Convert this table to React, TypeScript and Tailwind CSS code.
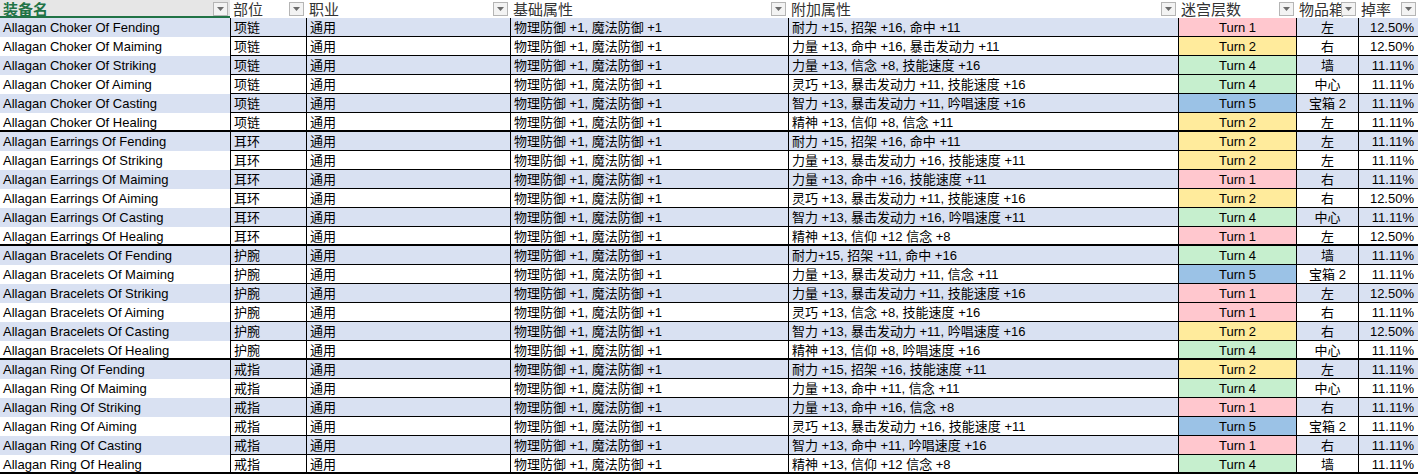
import React from "react";

type Row = [string, string, string, string, number, string, string];

const rows: Row[] = [
  ["Allagan Choker Of Fending", "项链", "通用", "耐力 +15, 招架 +16, 命中 +11", 1, "左", "12.50%"],
  ["Allagan Choker Of Maiming", "项链", "通用", "力量 +13, 命中 +16, 暴击发动力 +11", 2, "右", "12.50%"],
  ["Allagan Choker Of Striking", "项链", "通用", "力量 +13, 信念 +8, 技能速度 +16", 4, "墙", "11.11%"],
  ["Allagan Choker Of Aiming", "项链", "通用", "灵巧 +13, 暴击发动力 +11, 技能速度 +16", 4, "中心", "11.11%"],
  ["Allagan Choker Of Casting", "项链", "通用", "智力 +13, 暴击发动力 +11, 吟唱速度 +16", 5, "宝箱 2", "11.11%"],
  ["Allagan Choker Of Healing", "项链", "通用", "精神 +13, 信仰 +8, 信念 +11", 2, "左", "11.11%"],
  ["Allagan Earrings Of Fending", "耳环", "通用", "耐力 +15, 招架 +16, 命中 +11", 2, "左", "11.11%"],
  ["Allagan Earrings Of Striking", "耳环", "通用", "力量 +13, 暴击发动力 +16, 技能速度 +11", 2, "左", "11.11%"],
  ["Allagan Earrings Of Maiming", "耳环", "通用", "力量 +13, 命中 +16, 技能速度 +11", 1, "右", "11.11%"],
  ["Allagan Earrings Of Aiming", "耳环", "通用", "灵巧 +13, 暴击发动力 +11, 技能速度 +16", 2, "右", "12.50%"],
  ["Allagan Earrings Of Casting", "耳环", "通用", "智力 +13, 暴击发动力 +16, 吟唱速度 +11", 4, "中心", "11.11%"],
  ["Allagan Earrings Of Healing", "耳环", "通用", "精神 +13, 信仰 +12 信念 +8", 1, "左", "12.50%"],
  ["Allagan Bracelets Of Fending", "护腕", "通用", "耐力+15, 招架 +11, 命中 +16", 4, "墙", "11.11%"],
  ["Allagan Bracelets Of Maiming", "护腕", "通用", "力量 +13, 暴击发动力 +11, 信念 +11", 5, "宝箱 2", "11.11%"],
  ["Allagan Bracelets Of Striking", "护腕", "通用", "力量 +13, 暴击发动力 +11, 技能速度 +16", 1, "左", "12.50%"],
  ["Allagan Bracelets Of Aiming", "护腕", "通用", "灵巧 +13, 信念 +8, 技能速度 +16", 1, "右", "11.11%"],
  ["Allagan Bracelets Of Casting", "护腕", "通用", "智力 +13, 暴击发动力 +11, 吟唱速度 +16", 2, "右", "12.50%"],
  ["Allagan Bracelets Of Healing", "护腕", "通用", "精神 +13, 信仰 +8, 吟唱速度 +16", 4, "中心", "11.11%"],
  ["Allagan Ring Of Fending", "戒指", "通用", "耐力 +15, 招架 +16, 技能速度 +11", 2, "左", "11.11%"],
  ["Allagan Ring Of Maiming", "戒指", "通用", "力量 +13, 命中 +11, 信念 +11", 4, "中心", "11.11%"],
  ["Allagan Ring Of Striking", "戒指", "通用", "力量 +13, 命中 +16, 信念 +8", 1, "右", "11.11%"],
  ["Allagan Ring Of Aiming", "戒指", "通用", "灵巧 +13, 暴击发动力 +16, 技能速度 +11", 5, "宝箱 2", "11.11%"],
  ["Allagan Ring Of Casting", "戒指", "通用", "智力 +13, 命中 +11, 吟唱速度 +16", 1, "右", "11.11%"],
  ["Allagan Ring Of Healing", "戒指", "通用", "精神 +13, 信仰 +12 信念 +8", 4, "墙", "11.11%"],
];

const turnStyle: Record<number, string> = {
  1: "bg-[#ffc7ce] text-[#9c0006]",
  2: "bg-[#ffeb9c] text-[#9c5700]",
  4: "bg-[#c6efce] text-[#006100]",
  5: "bg-[#9bc2e6] text-[#1f3864]",
};

const gridCols = "grid grid-cols-[230px_76px_204px_278px_390px_118px_62px_60px]";

function Drop() {
  return (
    <div className="absolute right-[2px] top-[2px] flex h-[14px] w-[15px] items-center justify-center border border-[#b5b5b5] bg-[#f3f3f3]">
      <svg width="7" height="4" viewBox="0 0 7 4">
        <path d="M0 0 L7 0 L3.5 4 Z" fill="#6b6b6b" />
      </svg>
    </div>
  );
}

function HeadCell({ label, first }: { label: string; first?: boolean }) {
  return (
    <div
      className={
        "relative h-[18px] overflow-hidden pl-[3px] text-[15px] leading-[20px] " +
        (first
          ? "border-b-2 border-[#217346] bg-[#e6e6e6] font-bold text-[#217346]"
          : "bg-white text-[#333333]")
      }
    >
      {label}
      <Drop />
    </div>
  );
}

export default function App() {
  const font = {
    fontFamily: '"Liberation Sans", Arial, "Noto Sans CJK SC", sans-serif',
  };
  return (
    <div className="h-[475px] w-[1421px] overflow-hidden bg-white" style={font}>
      <div className={gridCols + " w-[1418px]"}>
        <HeadCell label="装备名" first />
        <HeadCell label="部位" />
        <HeadCell label="职业" />
        <HeadCell label="基础属性" />
        <HeadCell label="附加属性" />
        <HeadCell label="迷宫层数" />
        <HeadCell label="物品箱" />
        <HeadCell label="掉率" />
      </div>
      <div className="flex w-[1418px] flex-col border-r border-black">
        {rows.map((r, i) => {
          const stripe = i % 2 === 0 ? "bg-[#d9e1f2]" : "bg-white";
          const groupEnd = i % 6 === 5;
          const bb = groupEnd ? "border-b-2 border-black" : "border-b border-black";
          const cell =
            "h-[19px] overflow-hidden whitespace-nowrap text-[13px] leading-[20px] text-black border-l " +
            bb;
          return (
            <div key={i} className={gridCols}>
              <div
                className={
                  "h-[19px] overflow-hidden whitespace-nowrap pl-[3px] text-[13px] leading-[20px] text-black " +
                  stripe +
                  (groupEnd ? " border-b-2 border-black" : "")
                }
              >
                {r[0]}
              </div>
              <div className={cell + " pl-[3px] " + stripe}>{r[1]}</div>
              <div className={cell + " pl-[3px] " + stripe}>{r[2]}</div>
              <div className={cell + " pl-[3px] " + stripe}>物理防御 +1, 魔法防御 +1</div>
              <div className={cell + " pl-[3px] " + stripe}>{r[3]}</div>
              <div className={cell + " text-center " + turnStyle[r[4]]}>Turn {r[4]}</div>
              <div className={cell + " text-center " + stripe}>{r[5]}</div>
              <div className={cell + " pr-[4px] text-right " + stripe}>{r[6]}</div>
            </div>
          );
        })}
      </div>
    </div>
  );
}
